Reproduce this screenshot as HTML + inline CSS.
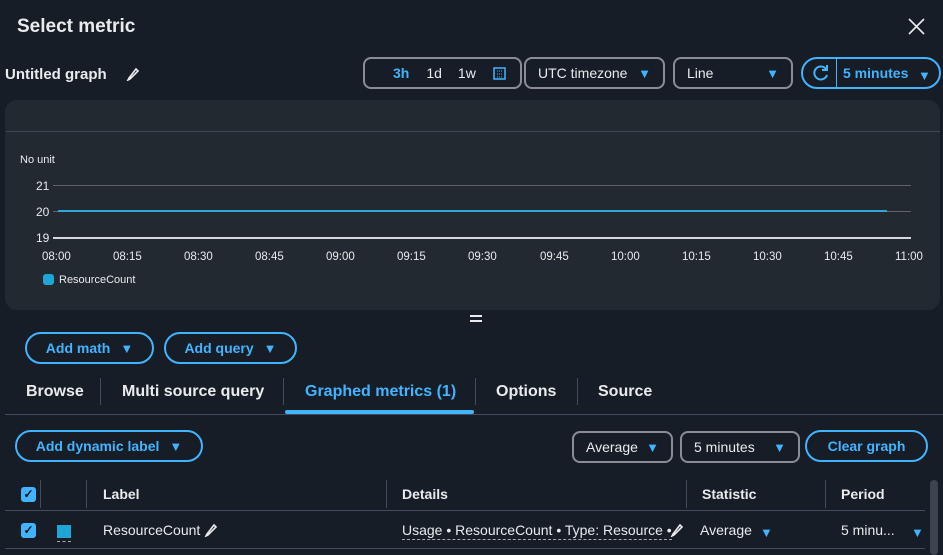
<!DOCTYPE html>
<html><head><meta charset="utf-8"><style>
*{box-sizing:border-box;margin:0;padding:0}
body{width:943px;height:555px;background:#161d26;color:#e9ebed;font-family:"Liberation Sans",sans-serif;position:relative;overflow:hidden}
.a{position:absolute}
.btn{position:absolute;border:2px solid #42b4ff;border-radius:16px;color:#42b4ff;font-weight:bold;font-size:14px;display:flex;align-items:center;justify-content:center;gap:10px}
.sel{position:absolute;border:2px solid #8c8c94;border-radius:8px;color:#e9ebed;font-size:14px;display:flex;align-items:center;padding:0 12px;justify-content:space-between}
.tri{color:#42b4ff;font-size:13px;line-height:1}
.tab{position:absolute;top:383px;font-size:16px;font-weight:bold;color:#e9ebed}
.vs{position:absolute;width:1px;background:#414d5c}
.ax{position:absolute;font-size:11px;color:#e9ebed}
.th{position:absolute;top:486px;font-size:14px;font-weight:bold;color:#e9ebed}
.cb{position:absolute;width:15px;height:15px;background:#42b4ff;border-radius:3px;color:#0f141a;font-size:12px;font-weight:bold;text-align:center;line-height:15px}
</style></head><body>
<div class="a" style="left:17px;top:16px;font-size:19px;font-weight:bold">Select metric</div>
<svg class="a" style="left:907px;top:17px" width="19" height="19"><path d="M2 2L17 17M17 2L2 17" stroke="#e9ebed" stroke-width="1.6"/></svg>
<div class="a" style="left:5px;top:66px;font-size:15px;font-weight:bold">Untitled graph</div>
<svg class="a" style="left:126px;top:67px" width="14" height="14"><path d="M3 11L2 13L4 12L12 4L10 2Z" fill="none" stroke="#e9ebed" stroke-width="1.6"/></svg>

<div class="sel" style="left:363px;top:57px;width:159px;height:32px;justify-content:flex-start;gap:0;padding-left:28px">
<span style="color:#42b4ff;font-weight:bold">3h</span><span style="margin-left:17px">1d</span><span style="margin-left:16px">1w</span>
<svg style="margin-left:17px" width="13" height="13"><rect x="1" y="1" width="11" height="11" fill="none" stroke="#42b4ff" stroke-width="1.5"/><path d="M4 4h1M8 4h1M4 7h1M8 7h1M4 10h1M8 10h1M6 4h1M6 7h1M6 10h1" stroke="#42b4ff"/></svg></div>
<div class="sel" style="left:524px;top:57px;width:141px;height:32px">UTC timezone <span class="tri">▼</span></div>
<div class="sel" style="left:673px;top:57px;width:120px;height:32px">Line <span class="tri">▼</span></div>
<div class="a" style="left:801px;top:57px;width:140px;height:32px;border:2px solid #42b4ff;border-radius:16px"></div>
<div class="a" style="left:836px;top:59px;width:1px;height:28px;background:#42b4ff"></div>
<svg class="a" style="left:812px;top:64px" width="18" height="18"><path d="M14 5A6.5 6.5 0 1 0 15 11" fill="none" stroke="#42b4ff" stroke-width="2"/><path d="M15 1V6H10" fill="none" stroke="#42b4ff" stroke-width="2"/></svg>
<div class="a" style="left:843px;top:65px;font-size:14px;font-weight:bold;color:#42b4ff">5 minutes</div>
<div class="a" style="left:918px;top:67px" ><span class="tri">▼</span></div>

<div class="a" style="left:5px;top:100px;width:935px;height:210px;background:#232930;border-radius:12px"></div>
<div class="a" style="left:6px;top:131px;width:934px;height:1px;background:#414750"></div>
<div class="ax" style="left:20px;top:154px">No unit</div>
<div class="ax" style="left:36px;top:179px;font-size:12px">21</div>
<div class="ax" style="left:36px;top:205px;font-size:12px">20</div>
<div class="ax" style="left:36px;top:231px;font-size:12px">19</div>
<div class="a" style="left:53px;top:185px;width:858px;height:1px;background:#5f6368"></div>
<div class="a" style="left:53px;top:211px;width:858px;height:1px;background:#5f6368"></div>
<div class="a" style="left:58px;top:210px;width:829px;height:2px;background:#2ea6d8"></div>
<div class="a" style="left:53px;top:237px;width:858px;height:2px;background:#d5d8dc"></div>
<div class="ax" style="left:42px;top:251px;font-size:11.5px">08:00</div>
<div class="ax" style="left:113px;top:251px;font-size:11.5px">08:15</div>
<div class="ax" style="left:184px;top:251px;font-size:11.5px">08:30</div>
<div class="ax" style="left:255px;top:251px;font-size:11.5px">08:45</div>
<div class="ax" style="left:326px;top:251px;font-size:11.5px">09:00</div>
<div class="ax" style="left:397px;top:251px;font-size:11.5px">09:15</div>
<div class="ax" style="left:468px;top:251px;font-size:11.5px">09:30</div>
<div class="ax" style="left:540px;top:251px;font-size:11.5px">09:45</div>
<div class="ax" style="left:611px;top:251px;font-size:11.5px">10:00</div>
<div class="ax" style="left:682px;top:251px;font-size:11.5px">10:15</div>
<div class="ax" style="left:753px;top:251px;font-size:11.5px">10:30</div>
<div class="ax" style="left:824px;top:251px;font-size:11.5px">10:45</div>
<div class="ax" style="left:895px;top:251px;font-size:11.5px">11:00</div>
<div class="a" style="left:43px;top:274px;width:11px;height:11px;background:#1ea7d6;border-radius:3px"></div>
<div class="ax" style="left:59px;top:274px">ResourceCount</div>
<div class="a" style="left:470px;top:315px;width:12px;height:2px;background:#e9ebed"></div>
<div class="a" style="left:470px;top:320px;width:12px;height:2px;background:#e9ebed"></div>

<div class="btn" style="left:25px;top:332px;width:129px;height:32px">Add math <span class="tri">▼</span></div>
<div class="btn" style="left:164px;top:332px;width:133px;height:32px">Add query <span class="tri">▼</span></div>

<div class="tab" style="left:26px">Browse</div>
<div class="vs" style="left:100px;top:378px;height:27px"></div>
<div class="tab" style="left:122px">Multi source query</div>
<div class="vs" style="left:283px;top:378px;height:27px"></div>
<div class="tab" style="left:305px;color:#42b4ff">Graphed metrics (1)</div>
<div class="a" style="left:285px;top:410px;width:189px;height:4px;background:#42b4ff;border-radius:2px"></div>
<div class="vs" style="left:475px;top:378px;height:27px"></div>
<div class="tab" style="left:496px">Options</div>
<div class="vs" style="left:577px;top:378px;height:27px"></div>
<div class="tab" style="left:598px">Source</div>
<div class="a" style="left:5px;top:414px;width:938px;height:1px;background:#414d5c"></div>

<div class="btn" style="left:15px;top:430px;width:188px;height:32px">Add dynamic label <span class="tri">▼</span></div>
<div class="sel" style="left:572px;top:431px;width:101px;height:32px">Average <span class="tri">▼</span></div>
<div class="sel" style="left:680px;top:431px;width:120px;height:32px">5 minutes <span class="tri">▼</span></div>
<div class="btn" style="left:805px;top:430px;width:123px;height:32px">Clear graph</div>

<div class="cb" style="left:21px;top:487px">✓</div>
<div class="vs" style="left:40px;top:480px;height:28px"></div>
<div class="vs" style="left:86px;top:480px;height:28px"></div>
<div class="th" style="left:103px">Label</div>
<div class="vs" style="left:386px;top:480px;height:28px"></div>
<div class="th" style="left:402px">Details</div>
<div class="vs" style="left:686px;top:480px;height:28px"></div>
<div class="th" style="left:702px">Statistic</div>
<div class="vs" style="left:825px;top:480px;height:28px"></div>
<div class="th" style="left:841px">Period</div>
<div class="a" style="left:5px;top:510px;width:920px;height:1px;background:#414d5c"></div>
<div class="a" style="left:930px;top:480px;width:8px;height:75px;background:#3b4450;border-radius:4px"></div>

<div class="cb" style="left:21px;top:523px">✓</div>
<div class="a" style="left:57px;top:525px;width:14px;height:13px;background:#1ea7d6"></div>
<div class="a" style="left:57px;top:541px;width:14px;border-top:1px dashed #aaa"></div>
<div class="a" style="left:103px;top:522px;font-size:14px">ResourceCount</div>
<svg class="a" style="left:204px;top:523px" width="14" height="14"><path d="M3 11L2 13L4 12L12 4L10 2Z" fill="none" stroke="#e9ebed" stroke-width="1.6"/></svg>
<div class="a" style="left:402px;top:522px;font-size:14px;border-bottom:1px dashed #aaa;padding-bottom:1px">Usage • ResourceCount • Type: Resource •</div>
<svg class="a" style="left:670px;top:523px" width="14" height="14"><path d="M3 11L2 13L4 12L12 4L10 2Z" fill="none" stroke="#e9ebed" stroke-width="1.6"/></svg>
<div class="a" style="left:700px;top:522px;font-size:14px">Average</div>
<div class="a" style="left:760px;top:524px"><span class="tri">▼</span></div>
<div class="a" style="left:841px;top:522px;font-size:14px">5 minu...</div>
<div class="a" style="left:911px;top:524px"><span class="tri">▼</span></div>
<div class="a" style="left:5px;top:548px;width:920px;height:1px;background:#414d5c"></div>
</body></html>
